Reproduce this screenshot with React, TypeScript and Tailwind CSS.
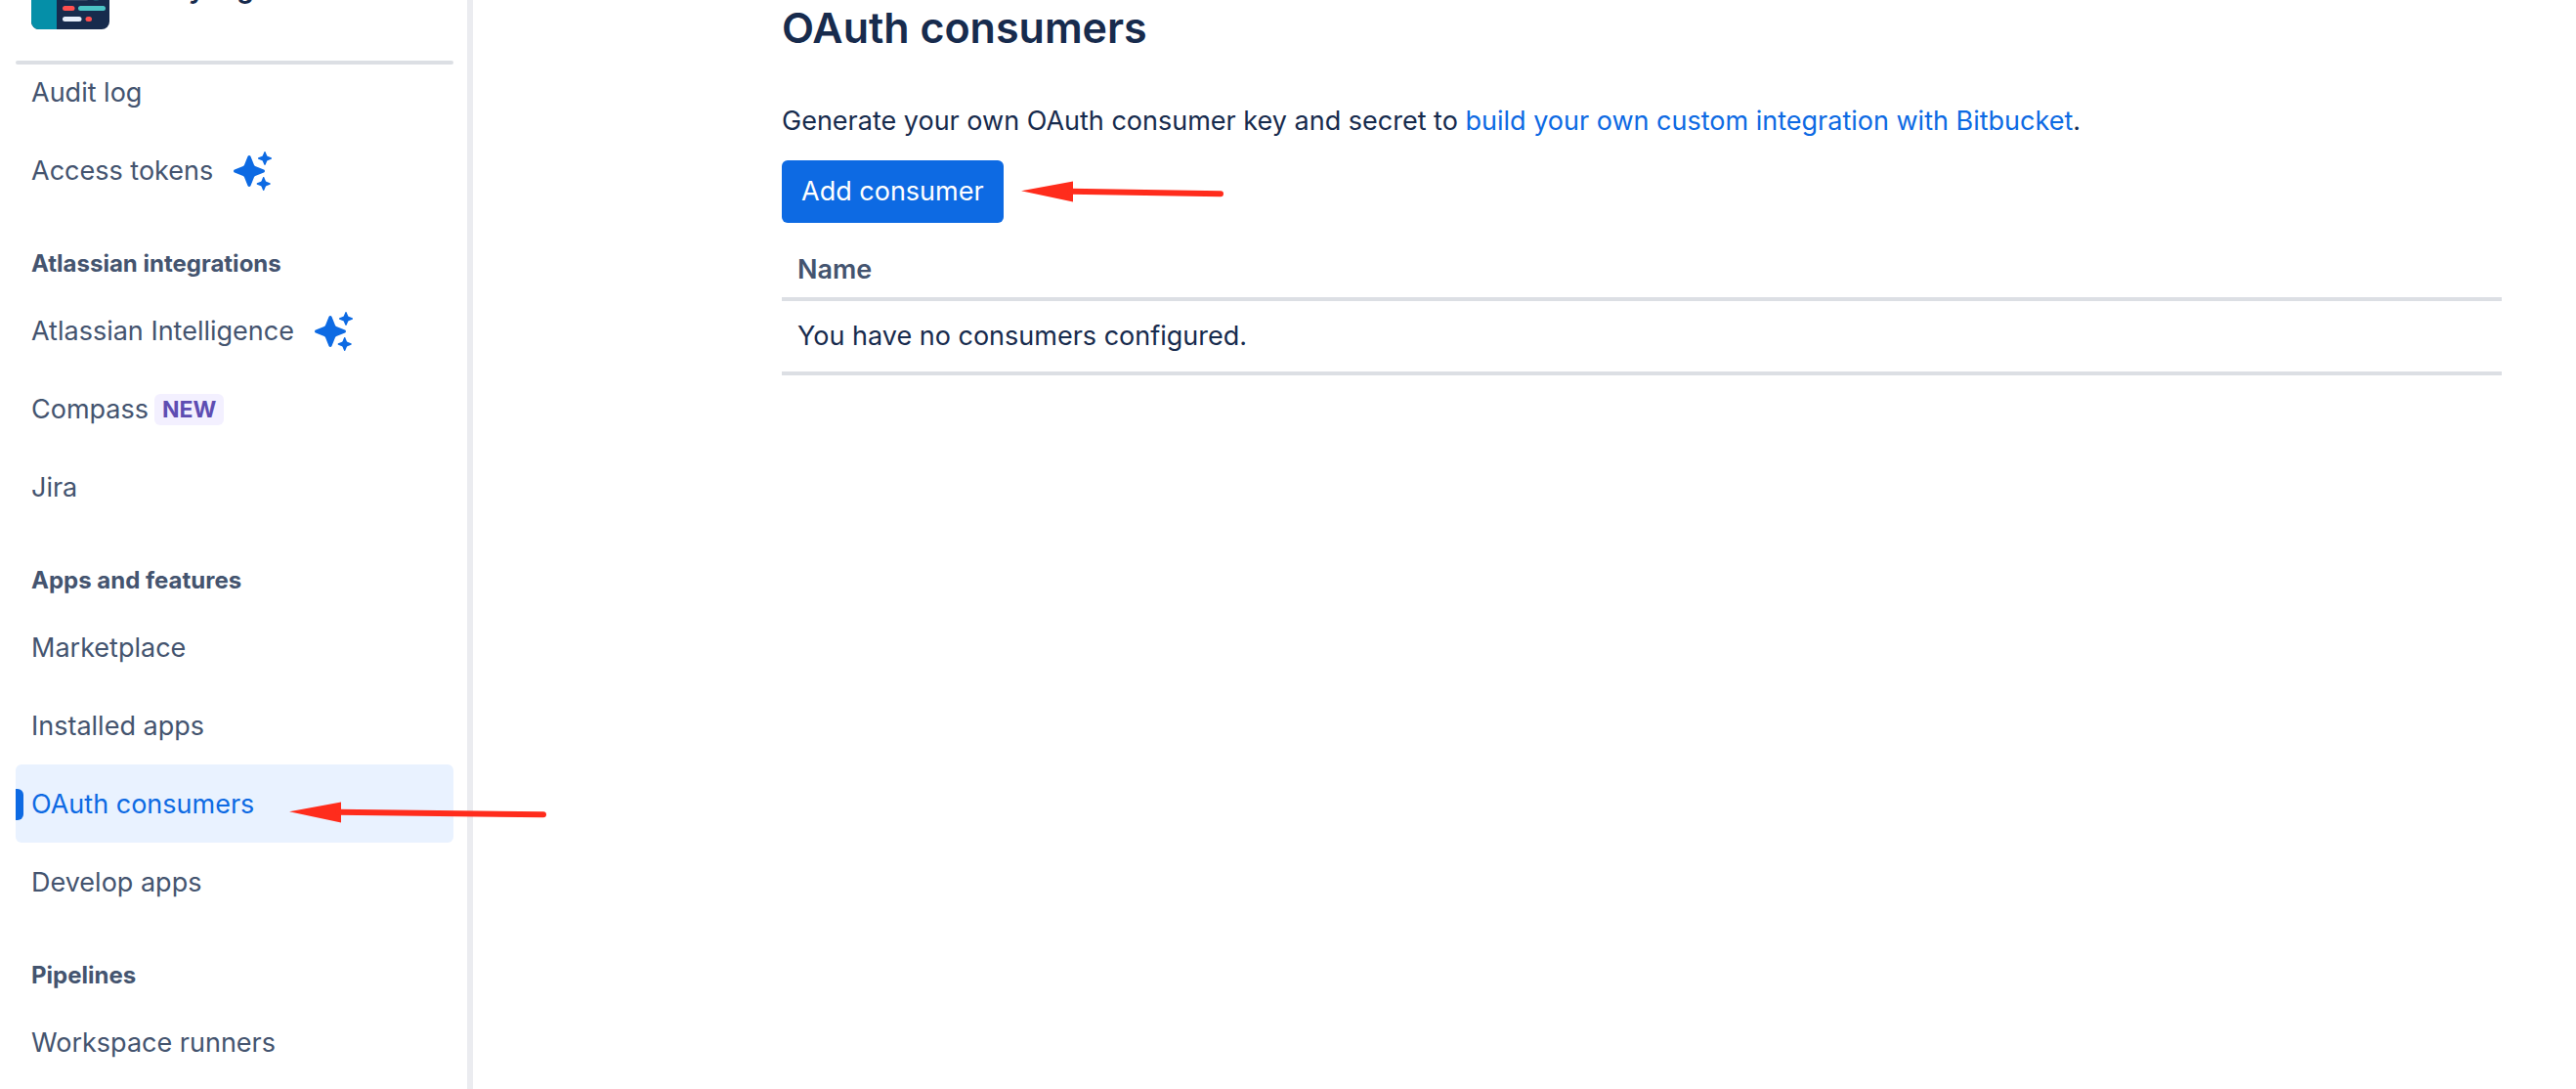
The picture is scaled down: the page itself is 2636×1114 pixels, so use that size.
import React from "react";

type Item = { label: string; sparkle?: boolean; badge?: string; active?: boolean };
type Section = { title: string; items: Item[] };

const topItems: Item[] = [{ label: "Audit log" }, { label: "Access tokens", sparkle: true }];

const sections: Section[] = [
  {
    title: "Atlassian integrations",
    items: [
      { label: "Atlassian Intelligence", sparkle: true },
      { label: "Compass", badge: "NEW" },
      { label: "Jira" },
    ],
  },
  {
    title: "Apps and features",
    items: [
      { label: "Marketplace" },
      { label: "Installed apps" },
      { label: "OAuth consumers", active: true },
      { label: "Develop apps" },
    ],
  },
  { title: "Pipelines", items: [{ label: "Workspace runners" }] },
];

const STAR =
  "M-1.500 -15C-1 -16.300 1 -16.300 1.500 -15L5 -6.200Q5.400 -5.400 6.200 -5L15 -1.500C16.300 -1 16.300 1 15 1.500L6.200 5Q5.400 5.400 5 6.200L1.500 15C1 16.300 -1 16.300 -1.500 15L-5 6.200Q-5.400 5.400 -6.200 5L-15 1.500C-16.300 1 -16.300 -1 -15 -1.500L-6.200 -5Q-5.400 -5.400 -5 -6.200Z";

function Sparkle() {
  return (
    <svg width="40" height="40" viewBox="0 0 40 40" fill="#0d6ae3" className="ml-5" aria-hidden="true">
      <path d={STAR} transform="translate(17 20)" />
      <path d={STAR} transform="translate(33 7) scale(.44)" />
      <path d={STAR} transform="translate(31.700 33) scale(.44)" />
    </svg>
  );
}

/* Red pointer: solid head on the left, round-capped shaft to the right. */
function Arrow({ length, className }: { length: number; className?: string }) {
  return (
    <svg
      width={length}
      height="22"
      viewBox={`0 0 ${length} 22`}
      className={className}
      aria-hidden="true"
    >
      <path d="M0 10.300L53 .5V21.500Z" fill="#ff2c1c" />
      <path d={`M50 10.800L${length - 4} 13.200`} stroke="#ff2c1c" strokeWidth="6" strokeLinecap="round" />
    </svg>
  );
}

function WorkspaceLogo() {
  return (
    <svg width="80" height="80" viewBox="0 0 80 80" className="shrink-0 rounded-lg" aria-hidden="true">
      <rect width="80" height="80" fill="#172b4d" />
      <rect width="26" height="80" fill="#058fa8" />
      <g strokeWidth="5" strokeLinecap="round">
        <path d="M35.500 48.500H56" stroke="#344563" />
        <path d="M65.500 48.500H67" stroke="#1d5068" />
        <path d="M34.500 58.500H42" stroke="#ff4f4f" />
        <path d="M50.500 58.500H73.500" stroke="#4bc3c5" />
        <path d="M34.500 69.500H49" stroke="#e6eefa" />
        <path d="M58 69.500H59.500" stroke="#ff4f4f" />
      </g>
    </svg>
  );
}

function NavItem({ item }: { item: Item }) {
  return (
    <li>
      <a
        href="#"
        aria-current={item.active ? "page" : undefined}
        className={
          item.active
            ? "relative flex h-20 items-center rounded-md bg-[#e9f2ff] px-4 pt-0.5 text-[#0d6ae3]"
            : "relative flex h-20 items-center rounded-md px-4 pt-0.5"
        }
      >
        {item.active && <span className="absolute left-0 h-8 w-2 rounded-r-md bg-[#0d6ae3]" />}
        {item.label}
        {item.sparkle && <Sparkle />}
        {item.badge && (
          <span className="ml-1.5 flex h-8 items-center rounded-md bg-[#f3f0ff] px-2 text-[23px] font-bold text-[#5e4db2]">
            {item.badge}
          </span>
        )}
        {item.active && <Arrow length={264} className="absolute top-[38px] left-[280px] z-10" />}
      </a>
    </li>
  );
}

export default function App() {
  return (
    <div className="flex min-h-screen overflow-hidden bg-white font-['Inter',sans-serif] text-[27px] leading-10 text-[#172b4d]">
      <aside className="w-[484px] shrink-0 border-r-[6px] border-[#ebecf0] pr-3.5 pl-4 text-[#44546f]">
        <header className="flex h-[62px] items-end px-4 pb-8">
          <div className="flex items-center gap-6 font-bold text-[#172b4d]">
            <WorkspaceLogo />
            <span className="pb-0.5">Kerry org.</span>
          </div>
        </header>
        <hr className="h-1 rounded-full border-0 bg-[#dcdfe4]" />
        <nav className="-mt-3">
          <ul>{topItems.map((i) => <NavItem key={i.label} item={i} />)}</ul>
          {sections.map((s) => (
            <section key={s.title}>
              <h2 className="px-4 pt-9 pb-2 text-2xl leading-10 font-bold">{s.title}</h2>
              <ul>{s.items.map((i) => <NavItem key={i.label} item={i} />)}</ul>
            </section>
          ))}
        </nav>
      </aside>
      <main className="min-w-0 flex-1 pr-[76px] pl-[316px]">
        <h1 className="text-[43px] leading-14 font-semibold">OAuth consumers</h1>
        <p className="mt-12">
          Generate your own OAuth consumer key and secret to{" "}
          <a href="#" className="text-[#0d6ae3]">build your own custom integration with Bitbucket</a>.
        </p>
        <div className="mt-5 flex items-center gap-[18px]">
          <button type="button" className="h-16 rounded-md bg-[#0d6ae3] px-5 text-white">Add consumer</button>
          <Arrow length={208} />
        </div>
        <table className="mt-5 w-full border-collapse text-left">
          <thead>
            <tr className="border-b-4 border-[#dcdfe4]">
              <th scope="col" className="px-4 py-2 font-semibold text-[#44546f]">Name</th>
            </tr>
          </thead>
          <tbody>
            <tr className="border-b-4 border-[#dcdfe4]">
              <td className="px-4 py-4">You have no consumers configured.</td>
            </tr>
          </tbody>
        </table>
      </main>
    </div>
  );
}
